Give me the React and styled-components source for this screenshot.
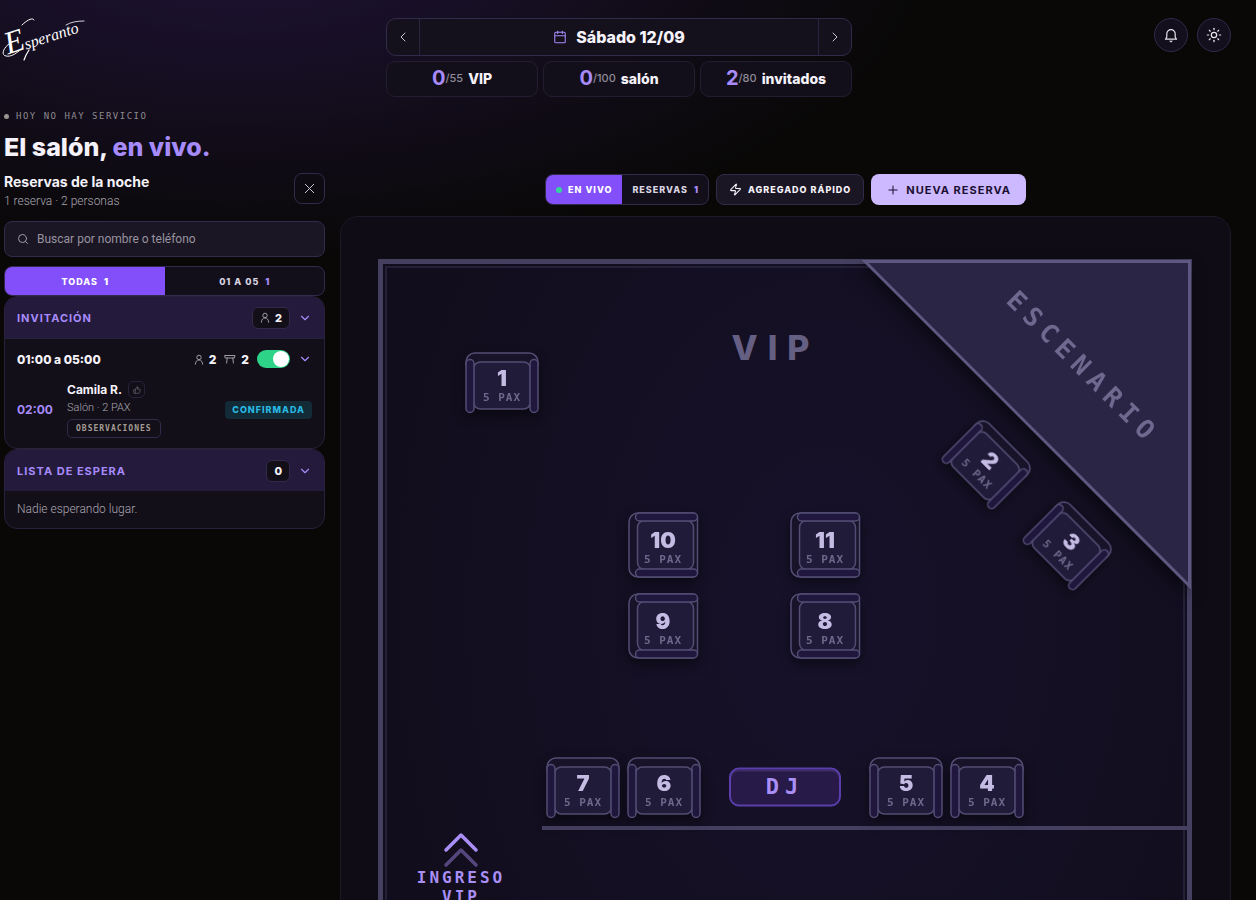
import { useState } from 'react'
import styled, { createGlobalStyle, css } from 'styled-components'
import {
	Calendar,
	ChevronDown,
	ChevronLeft,
	ChevronRight,
	Plus,
	Search,
	Sun,
	ThumbsUp,
	X,
	Zap,
} from 'lucide-react'

const sans = 'Inter, "Liberation Sans", sans-serif'
const light = 'Roboto, "Liberation Sans", sans-serif'
const mono = '"DejaVu Sans Mono", "Liberation Mono", monospace'

const GlobalStyle = createGlobalStyle`
	* {
		box-sizing: border-box;
	}
	html {
		background: #090807;
		scrollbar-width: none;
	}
	body {
		margin: 0;
		font-family: ${sans};
		color: #f5f2fa;
	}
	button, input {
		font-family: inherit;
		color: inherit;
		margin: 0;
	}
	button {
		padding: 0;
		border: none;
		background: none;
		cursor: pointer;
	}
	h1, h2, h3, p {
		margin: 0;
	}
`
const Page = styled.div`
	min-height: 100vh;
	padding: 18px 25px 40px 4px;
	background: radial-gradient(
			ellipse 700px 320px at 240px -60px,
			#1f1336,
			rgba(9, 8, 7, 0)
		)
		#090807;
`
const Header = styled.header`
	display: grid;
	grid-template-columns: 1fr 466px 1fr;
	padding-left: 3px;
`
const Logo = styled.svg`
	display: block;
	overflow: visible;
	margin-left: -7px;
	text {
		font-family: 'Liberation Serif', serif;
		font-style: italic;
		fill: #fff;
	}
`
const DateBar = styled.div`
	display: flex;
	height: 38px;
	margin-bottom: 5px;
	border: 1px solid #322a4b;
	border-radius: 10px;
	background: #15111c;
`
const DateArrow = styled.button`
	display: flex;
	align-items: center;
	justify-content: center;
	width: 32px;
	color: #c9c5d2;
`
const DateButton = styled.button`
	display: flex;
	flex: 1;
	align-items: center;
	justify-content: center;
	gap: 9px;
	border-left: 1px solid #2a2440;
	border-right: 1px solid #2a2440;
	font-size: 16px;
	font-weight: 800;
	svg {
		color: #a78bfa;
	}
`
const Stats = styled.div`
	display: grid;
	grid-template-columns: repeat(3, 1fr);
	gap: 5px;
`
const Stat = styled.div`
	display: flex;
	align-items: center;
	justify-content: center;
	height: 36px;
	padding-bottom: 2px;
	border: 1px solid #221d31;
	border-radius: 9px;
	background: #130f1a;
	font-size: 14px;
	font-weight: 800;
	b {
		font-size: 20px;
		font-weight: 700;
		color: #a78bfa;
	}
	small {
		margin-right: 5px;
		font-size: 11px;
		font-weight: 500;
		color: #8f8b98;
	}
`
const Actions = styled.div`
	display: flex;
	justify-content: flex-end;
	gap: 9px;
`
const RoundButton = styled.button`
	display: flex;
	align-items: center;
	justify-content: center;
	width: 34px;
	height: 34px;
	border: 1px solid #322a4b;
	border-radius: 50%;
	background: #130f1c;
	color: #e6e3ee;
`
const Status = styled.p`
	display: flex;
	align-items: center;
	gap: 7px;
	margin-top: 12px;
	font-family: ${mono};
	font-size: 9px;
	line-height: 14px;
	letter-spacing: 1.5px;
	color: #8f8a90;
	&::before {
		content: '';
		width: 5px;
		height: 5px;
		border-radius: 50%;
		background: #9b958f;
	}
`
const Title = styled.h1`
	margin-top: 8px;
	font-size: 25px;
	font-weight: 800;
	line-height: 32px;
	span {
		color: #a78bfa;
	}
`
const Main = styled.main`
	display: grid;
	grid-template-columns: 321px minmax(0, 1fr);
	gap: 15px;
	margin-top: 10px;
`
const SideHead = styled.div`
	display: flex;
	justify-content: space-between;
	height: 48px;
	h2 {
		font-size: 14px;
		font-weight: 700;
		line-height: 18px;
	}
	p {
		font-family: ${light};
		font-size: 12px;
		font-weight: 300;
		line-height: 21px;
		color: #aaa6b0;
	}
`
const CloseButton = styled.button`
	display: flex;
	align-items: center;
	justify-content: center;
	width: 31px;
	height: 31px;
	border: 1px solid #322a4b;
	border-radius: 8px;
	color: #c9c5d2;
`
const SearchBox = styled.label`
	display: flex;
	align-items: center;
	gap: 8px;
	height: 36px;
	padding: 0 12px;
	border: 1px solid #322a4b;
	border-radius: 8px;
	background: #1b1623;
	color: #a09ca6;
	input {
		flex: 1;
		min-width: 0;
		padding: 0;
		border: none;
		outline: none;
		background: none;
		font-family: ${light};
		font-size: 12px;
		font-weight: 400;
	}
	input::placeholder {
		color: #9893a0;
		opacity: 1;
	}
`
const Tabs = styled.div`
	display: flex;
	overflow: hidden;
	height: 31px;
	border: 1px solid #322a4b;
	border-radius: 8px;
	background: #130f1a;
`
const SideTabs = styled(Tabs)`
	height: 30px;
	margin-top: 9px;
`
const Tab = styled.button`
	display: flex;
	flex: 1 1 auto;
	align-items: center;
	justify-content: center;
	gap: 6px;
	padding: 0 10px;
	font-size: 9px;
	font-weight: 800;
	letter-spacing: 1px;
	white-space: nowrap;
	color: #d9d5e2;
	${SideTabs} & {
		flex-basis: 0;
	}
	b {
		letter-spacing: 0;
		color: #a78bfa;
	}
	${(props) =>
		props.$active &&
		css`
			background: #834ffa;
			color: #fff;
			b {
				color: #fff;
			}
		`}
`
const LiveDot = styled.i`
	width: 6px;
	height: 6px;
	border-radius: 50%;
	background: #34d399;
`
const Section = styled.section`
	overflow: hidden;
	border: 1px solid #28213c;
	border-radius: 13px;
	background: #130f18;
`
const SectionHead = styled.div`
	display: flex;
	align-items: center;
	height: 41px;
	padding: 0 12px;
	background: #241a3c;
	h3 {
		flex: 1;
		font-size: 11px;
		font-weight: 700;
		letter-spacing: 1px;
		color: #a78bfa;
	}
`
const Count = styled.span`
	display: flex;
	align-items: center;
	gap: 5px;
	height: 22px;
	padding: 0 7px;
	border: 1px solid #322a4b;
	border-radius: 6px;
	background: #130f18;
	font-size: 11px;
	font-weight: 800;
	svg {
		color: #a09ca6;
	}
`
const Fold = styled.button`
	display: flex;
	margin-left: 8px;
	color: #a78bfa;
`
const Shift = styled.div`
	display: flex;
	align-items: center;
	height: 41px;
	padding: 0 12px;
	border-top: 1px solid #28213c;
	strong {
		flex: 1;
		font-size: 12px;
		font-weight: 800;
	}
`
const ShiftCount = styled.span`
	display: flex;
	align-items: center;
	gap: 5px;
	margin-right: 8px;
	font-size: 12px;
	font-weight: 800;
	svg {
		color: #a09ca6;
	}
`
const Switch = styled.input`
	appearance: none;
	display: flex;
	justify-content: flex-end;
	width: 33px;
	height: 18px;
	padding: 1px;
	border-radius: 9px;
	background: #2dd487;
	&::before {
		content: '';
		width: 16px;
		height: 16px;
		border-radius: 50%;
		background: #fff;
	}
	&:not(:checked) {
		justify-content: flex-start;
		background: #3a3448;
	}
`
const Guest = styled.div`
	display: grid;
	grid-template-columns: 50px 1fr auto;
	align-items: center;
	padding: 2px 12px 10px;
	time {
		font-size: 12px;
		font-weight: 700;
		color: #a78bfa;
	}
`
const GuestName = styled.div`
	display: flex;
	align-items: center;
	gap: 6px;
	font-size: 12px;
	font-weight: 700;
	line-height: 17px;
`
const GuestInfo = styled.p`
	margin-bottom: 2px;
	font-family: ${light};
	font-size: 11px;
	font-weight: 300;
	line-height: 19px;
	color: #aaa6b0;
`
const LikeButton = styled.button`
	display: flex;
	align-items: center;
	justify-content: center;
	width: 17px;
	height: 17px;
	border: 1px solid #28213c;
	border-radius: 5px;
	color: #6d6878;
`
const NotesButton = styled.button`
	display: block;
	height: 19px;
	padding: 0 8px;
	border: 1px solid #322a4b;
	border-radius: 5px;
	font-family: ${mono};
	font-size: 8px;
	font-weight: 700;
	letter-spacing: 1px;
	color: #a39c94;
`
const Badge = styled.span`
	height: 18px;
	padding: 0 7px;
	border-radius: 4px;
	background: #132a37;
	font-size: 9px;
	font-weight: 800;
	line-height: 18px;
	letter-spacing: 1px;
	color: #28b9e2;
`
const Empty = styled.p`
	padding: 9px 12px;
	font-family: ${light};
	font-size: 12px;
	font-weight: 300;
	line-height: 19px;
	color: #aaa6b0;
`
const Toolbar = styled.div`
	display: flex;
	justify-content: center;
	gap: 7px;
	margin: 1px 0 11px;
`
const ToolButton = styled.button`
	display: flex;
	align-items: center;
	gap: 6px;
	height: 31px;
	padding: 0 12px;
	border: 1px solid #322a4b;
	border-radius: 8px;
	background: #1b1623;
	font-size: 9px;
	font-weight: 800;
	letter-spacing: 1px;
`
const PrimaryButton = styled(ToolButton)`
	padding: 0 15px;
	border: none;
	background: #cdb9ff;
	font-size: 11px;
	font-weight: 700;
	color: #1b1033;
`
const Floor = styled.div`
	padding: 42px 38px 40px 37px;
	border: 1px solid #1d1929;
	border-radius: 18px;
	background: #0f0c15;
`
const Room = styled.div`
	position: relative;
	aspect-ratio: 814 / 1000;
	border: 5px solid #454060;
	background: radial-gradient(ellipse at 55% 35%, #17122a, #110d1c 75%);
	&::before {
		content: '';
		position: absolute;
		inset: 2px;
		border: 2px solid #242037;
	}
`
/* items are pinned by their centre */
const Pin = styled.div`
	position: absolute;
	left: ${(props) => props.$x / 8.04}%;
	top: ${(props) => props.$y / 9.9}%;
	transform: translate(-50%, -50%) rotate(${(props) => props.$turn || 0}deg);
`
const Stage = styled.svg`
	position: absolute;
	top: -5px;
	right: -5px;
	filter: drop-shadow(-3px 6px 8px rgba(0, 0, 0, 0.5));
	text {
		font-family: ${mono};
		font-size: 26px;
		font-weight: 700;
		letter-spacing: 7px;
		fill: #6f688f;
	}
`
const Wall = styled.div`
	position: absolute;
	right: -3px;
	top: ${562 / 9.9}%;
	left: ${159 / 8.04}%;
	height: 4px;
	background: #454060;
`
const Zone = styled.span`
	padding-left: 7px;
	font-size: 34px;
	font-weight: 800;
	letter-spacing: 10px;
	color: #655f83;
`
const Table = styled.button`
	position: relative;
	display: flex;
	flex-direction: column;
	align-items: center;
	width: ${(props) => (props.$side ? 72 : 74)}px;
	height: ${(props) => (props.$side ? 66 : 62)}px;
	padding-top: ${(props) => (props.$side ? 18 : 16)}px;
	filter: drop-shadow(0 5px 6px rgba(0, 0, 0, 0.45));
	svg {
		position: absolute;
		inset: 0;
		stroke: #534d74;
		stroke-width: 1.5;
	}
	strong {
		position: relative;
		font-size: 22px;
		font-weight: 900;
		line-height: 20px;
		color: #c5bce3;
	}
	span {
		position: relative;
		font-family: ${mono};
		font-size: 11px;
		font-weight: 700;
		line-height: 20px;
		letter-spacing: 1px;
		color: #6f688c;
	}
`
const Dj = styled.div`
	width: 112px;
	height: 39px;
	border: 2px solid #5a3fac;
	border-radius: 10px;
	background: #281a48;
	font-family: ${mono};
	font-size: 22px;
	font-weight: 700;
	line-height: 33px;
	letter-spacing: 6px;
	text-align: center;
	color: #a98ff5;
	box-shadow: inset 0 2px 0 #3b2c63;
`
const Entrance = styled.div`
	display: flex;
	flex-direction: column;
	align-items: center;
	width: 100px;
	font-family: ${mono};
	font-size: 16px;
	font-weight: 700;
	line-height: 19px;
	letter-spacing: 3px;
	text-align: center;
	color: #a98ff5;
`

const TABLES = [
	{ id: 1, x: 119, y: 119 },
	{ id: 2, x: 604, y: 200, turn: 45 },
	{ id: 3, x: 685, y: 281, turn: 45 },
	{ id: 10, x: 280, y: 281, side: true },
	{ id: 11, x: 442, y: 281, side: true },
	{ id: 9, x: 280, y: 362, side: true },
	{ id: 8, x: 442, y: 362, side: true },
	{ id: 7, x: 200, y: 524 },
	{ id: 6, x: 281, y: 524 },
	{ id: 5, x: 523, y: 524 },
	{ id: 4, x: 604, y: 524 },
]

const PersonIcon = () => (
	<svg width="10" height="11" viewBox="0 0 10 11" fill="none" stroke="currentColor">
		<circle cx="5" cy="3.4" r="2.2" />
		<path d="M1.4 10.2c.2-2.7 1.3-4.2 3.6-4.2s3.4 1.5 3.6 4.2" strokeLinecap="round" />
	</svg>
)

const TableIcon = () => (
	<svg width="12" height="10" viewBox="0 0 12 10" fill="none" stroke="currentColor">
		<path d="M1 1.5h10L10.4 4H1.6zM3.2 4 2.6 9M8.8 4l.6 5" strokeLinejoin="round" strokeLinecap="round" />
	</svg>
)

const BellIcon = () => (
	<svg width="14" height="15" viewBox="0 0 14 15" fill="none" stroke="currentColor" strokeWidth="1.2">
		<path d="M1.5 11.2h11L11.2 9V5.8a4.2 4.2 0 0 0-8.4 0V9z" strokeLinejoin="round" />
		<path d="M5.6 13h2.8L7 14.2z" fill="currentColor" strokeWidth="0.6" />
	</svg>
)

const Sofa = ({ side }) =>
	side ? (
		<svg width="72" height="66" viewBox="0 0 72 66" aria-hidden="true">
			<rect x="1.5" y="1" width="69" height="64" rx="8" fill="#181329" stroke="none" />
			<path d="M67 65H11a9 9 0 0 1-9-9V10a9 9 0 0 1 9-9h56" fill="none" />
			<path d="M70.5 5v56" />
			<rect x="10.5" y="8.5" width="56" height="49" rx="7" fill="#211b3a" />
			<rect x="8.5" y="1" width="62" height="8" rx="4" fill="#1f183c" />
			<rect x="8.5" y="57" width="62" height="8" rx="4" fill="#1f183c" />
		</svg>
	) : (
		<svg width="74" height="62" viewBox="0 0 74 62" aria-hidden="true">
			<path d="M1 56V10a9 9 0 0 1 9-9h54a9 9 0 0 1 9 9v46z" fill="#181329" stroke="none" />
			<path d="M1 14v-4a9 9 0 0 1 9-9h54a9 9 0 0 1 9 9v4" fill="none" />
			<rect x="8.5" y="10" width="57" height="47" rx="7" fill="#211b3a" />
			<rect x="1" y="7.5" width="8" height="53" rx="4" fill="#1f183c" />
			<rect x="65" y="7.5" width="8" height="53" rx="4" fill="#1f183c" />
		</svg>
	)

const App = () => {
	const [search, setSearch] = useState('')
	const [tab, setTab] = useState('todas')
	const [view, setView] = useState('vivo')
	const [open, setOpen] = useState(true)

	return (
		<>
			<GlobalStyle />
			<Page>
				<Header>
					<Logo width="90" height="46" viewBox="0 18 90 46" role="img" aria-label="Esperanto">
						<g transform="rotate(-18 25 52)">
							<text x="8" y="49" fontSize="32">E</text>
							<text x="27" y="50" fontSize="16">speranto</text>
						</g>
						<g fill="none" stroke="#fff" strokeLinecap="round">
							<path d="M12 42C4 46 0 55 6 56c5 1 9-2 13-5" />
							<path d="M22 25c5-5 11-8 12-5" />
							<path d="M29 50c-2 3-4 7-5 10" strokeWidth="1.2" />
							<path d="M66 25c5-3 11-4 18-4" strokeWidth="0.8" />
						</g>
					</Logo>
					<div>
						<DateBar>
							<DateArrow aria-label="Día anterior">
								<ChevronLeft size={16} strokeWidth={1.5} />
							</DateArrow>
							<DateButton>
								<Calendar size={14} strokeWidth={1.8} />
								Sábado 12/09
							</DateButton>
							<DateArrow aria-label="Día siguiente">
								<ChevronRight size={16} strokeWidth={1.5} />
							</DateArrow>
						</DateBar>
						<Stats>
							<Stat>
								<b>0</b>
								<small>/55</small>
								VIP
							</Stat>
							<Stat>
								<b>0</b>
								<small>/100</small>
								salón
							</Stat>
							<Stat>
								<b>2</b>
								<small>/80</small>
								invitados
							</Stat>
						</Stats>
					</div>
					<Actions>
						<RoundButton aria-label="Notificaciones">
							<BellIcon />
						</RoundButton>
						<RoundButton aria-label="Tema">
							<Sun size={16} strokeWidth={1.8} />
						</RoundButton>
					</Actions>
				</Header>
				<Status>HOY NO HAY SERVICIO</Status>
				<Title>
					El salón, <span>en vivo.</span>
				</Title>
				<Main>
					<aside>
						<SideHead>
							<div>
								<h2>Reservas de la noche</h2>
								<p>1 reserva · 2 personas</p>
							</div>
							<CloseButton aria-label="Cerrar">
								<X size={17} strokeWidth={1.4} />
							</CloseButton>
						</SideHead>
						<SearchBox>
							<Search size={12} />
							<input
								type="text"
								aria-label="Buscar"
								placeholder="Buscar por nombre o teléfono"
								value={search}
								onChange={(e) => setSearch(e.target.value)}
							/>
						</SearchBox>
						<SideTabs>
							<Tab $active={tab === 'todas'} onClick={() => setTab('todas')}>
								TODAS <b>1</b>
							</Tab>
							<Tab $active={tab === 'turno'} onClick={() => setTab('turno')}>
								01 A 05 <b>1</b>
							</Tab>
						</SideTabs>
						<Section>
							<SectionHead>
								<h3>INVITACIÓN</h3>
								<Count>
									<PersonIcon />2
								</Count>
								<Fold aria-label="Plegar invitación">
									<ChevronDown size={14} />
								</Fold>
							</SectionHead>
							<Shift>
								<strong>01:00 a 05:00</strong>
								<ShiftCount>
									<PersonIcon />2
								</ShiftCount>
								<ShiftCount>
									<TableIcon />2
								</ShiftCount>
								<Switch
									type="checkbox"
									aria-label="Turno abierto"
									checked={open}
									onChange={(e) => setOpen(e.target.checked)}
								/>
								<Fold aria-label="Plegar turno">
									<ChevronDown size={14} />
								</Fold>
							</Shift>
							<Guest>
								<time>02:00</time>
								<div>
									<GuestName>
										Camila R.
										<LikeButton aria-label="Me gusta">
											<ThumbsUp size={8} />
										</LikeButton>
									</GuestName>
									<GuestInfo>Salón · 2 PAX</GuestInfo>
									<NotesButton>OBSERVACIONES</NotesButton>
								</div>
								<Badge>CONFIRMADA</Badge>
							</Guest>
						</Section>
						<Section>
							<SectionHead>
								<h3>LISTA DE ESPERA</h3>
								<Count>0</Count>
								<Fold aria-label="Plegar lista de espera">
									<ChevronDown size={14} />
								</Fold>
							</SectionHead>
							<Empty>Nadie esperando lugar.</Empty>
						</Section>
					</aside>
					<div>
						<Toolbar>
							<Tabs>
								<Tab $active={view === 'vivo'} onClick={() => setView('vivo')}>
									<LiveDot />
									EN VIVO
								</Tab>
								<Tab $active={view === 'reservas'} onClick={() => setView('reservas')}>
									RESERVAS <b>1</b>
								</Tab>
							</Tabs>
							<ToolButton>
								<Zap size={13} />
								AGREGADO RÁPIDO
							</ToolButton>
							<PrimaryButton>
								<Plus size={14} strokeWidth={1.8} />
								NUEVA RESERVA
							</PrimaryButton>
						</Toolbar>
						<Floor>
							<Room>
								<Stage width="330" height="330" viewBox="0 0 330 330">
									<path
										d="M3 2.5H327.5V327z"
										fill="#2b2545"
										stroke="#5e5880"
										strokeWidth="3"
									/>
									<text
										x="222"
										y="107"
										textAnchor="middle"
										dominantBaseline="central"
										transform="rotate(45 220 107)"
									>
										ESCENARIO
									</text>
								</Stage>
								<Wall />
								<Pin $x={389} $y={83}>
									<Zone>VIP</Zone>
								</Pin>
								{TABLES.map((table) => (
									<Pin key={table.id} $x={table.x} $y={table.y} $turn={table.turn}>
										<Table $side={table.side}>
											<Sofa side={table.side} />
											<strong>{table.id}</strong>
											<span>5 PAX</span>
										</Table>
									</Pin>
								))}
								<Pin $x={402} $y={523}>
									<Dj>DJ</Dj>
								</Pin>
								<Pin $x={78} $y={605}>
									<Entrance>
										<svg width="36" height="36" viewBox="0 0 36 36" fill="none" stroke="#a98ff5" strokeWidth="3.5" strokeLinecap="round" strokeLinejoin="round">
											<path d="M3 18 18 3l15 15" />
											<path d="M3 33 18 18l15 15" opacity="0.45" />
										</svg>
										INGRESO VIP
									</Entrance>
								</Pin>
							</Room>
						</Floor>
					</div>
				</Main>
			</Page>
		</>
	)
}

export default App
